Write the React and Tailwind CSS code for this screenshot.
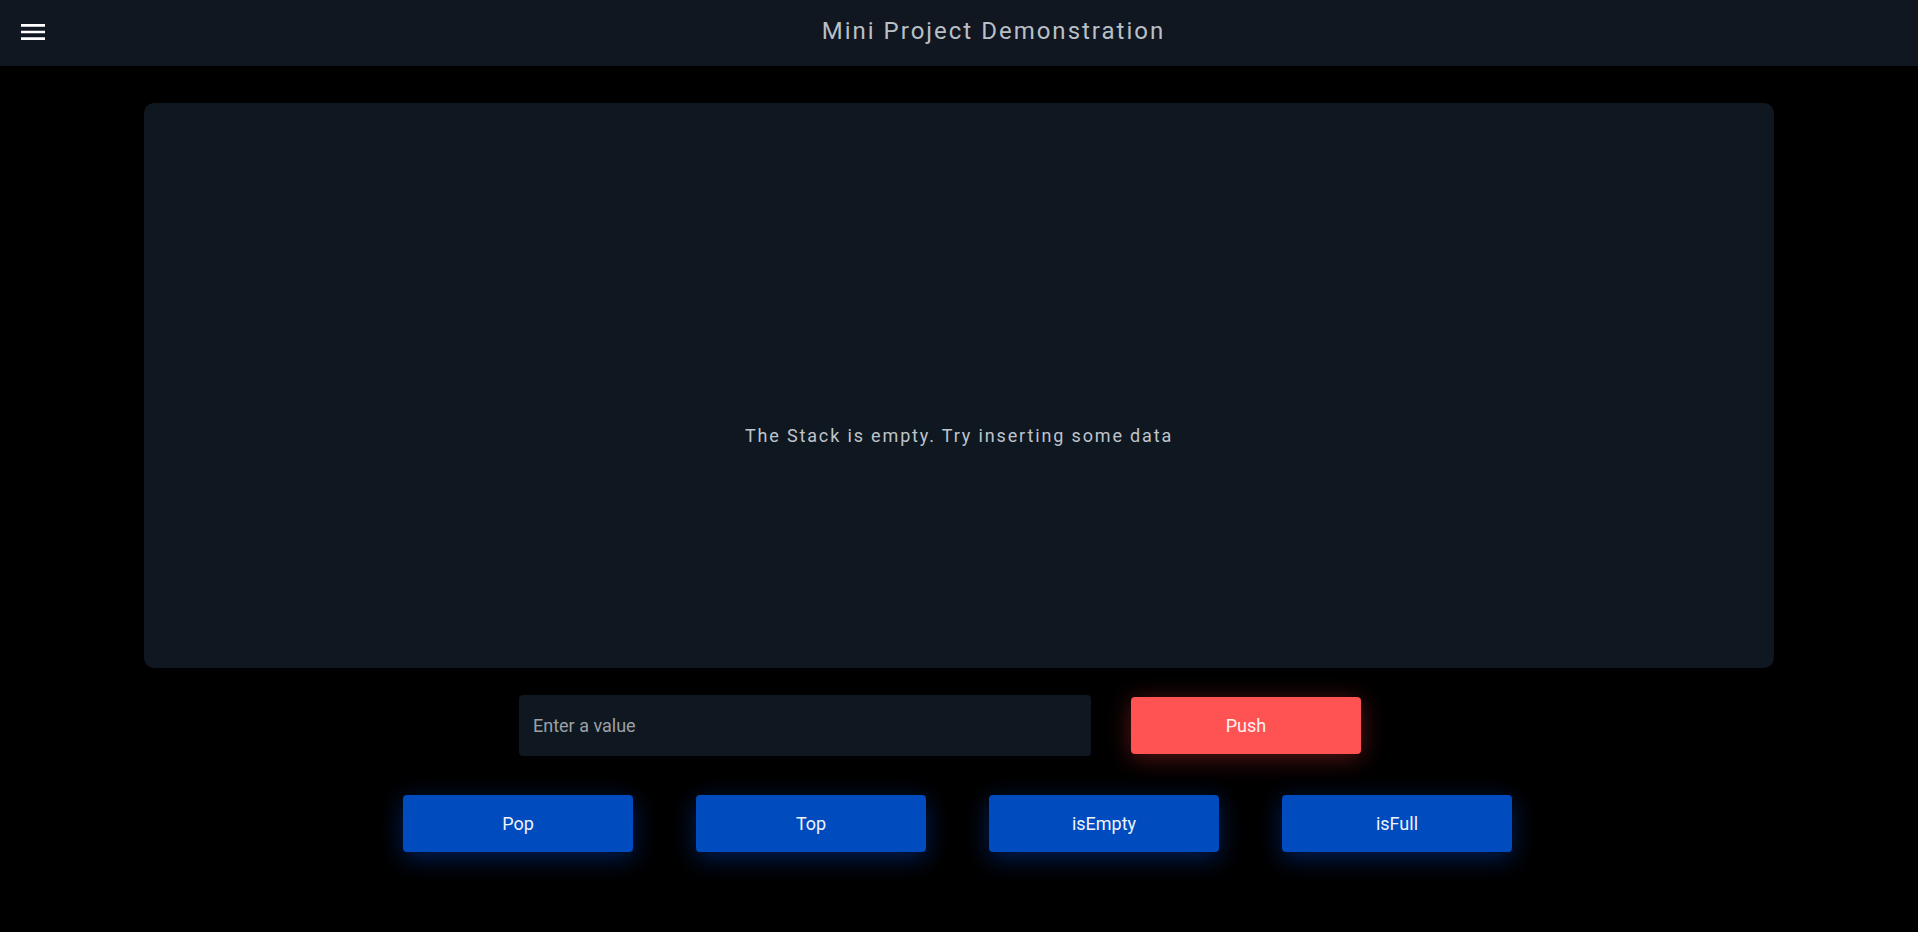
import { MdMenu } from 'react-icons/md';

const ops = ['Pop', 'Top', 'isEmpty', 'isFull'];

export default function App() {
  return (
    <div className="min-h-screen bg-black font-['Roboto',sans-serif]">
      <header className="h-[66px] bg-[#101720] flex items-center">
        <button className="ml-[17px] mt-[-2px] text-white">
          <MdMenu size={32} />
        </button>
        <h1 className="flex-1 pl-[20px] text-center text-[24px] tracking-[2px] text-[#b9bfc7] mt-[-4px]">Mini Project Demonstration</h1>
      </header>

      <main className="flex flex-col items-center">
        <section className="mt-[37px] w-[1630px] h-[565px] rounded-[10px] bg-[#0f1720] flex items-center justify-center pt-[100px]">
          <p className="text-[18px] tracking-[1.85px] text-[#bfc4cb]">The Stack is empty. Try inserting some data</p>
        </section>

        <div className="mt-[27px] flex items-center gap-[40px] pr-[38px]">
          <input
            type="text"
            placeholder="Enter a value"
            className="w-[572px] h-[61px] rounded-[4px] bg-[#0f1720] px-[14px] font-['Roboto',sans-serif] text-[18px] text-[#c0c4ca] placeholder:text-[#9ca1a8] outline-none"
          />
          <button className="w-[230px] h-[57px] rounded-[4px] bg-[#ff5252] text-[18px] text-[#fff2f2] shadow-[0_4px_24px_rgba(255,60,60,0.35)]">Push</button>
        </div>

        <div className="mt-[39px] mr-[3px] flex gap-[63px]">
          {ops.map((op) => (
            <button key={op} className="w-[230px] h-[57px] rounded-[4px] bg-[#004bbd] text-[18px] text-[#eef3ff] shadow-[0_6px_24px_rgba(0,90,255,0.35)]">{op}</button>
          ))}
        </div>
      </main>
    </div>
  );
}
